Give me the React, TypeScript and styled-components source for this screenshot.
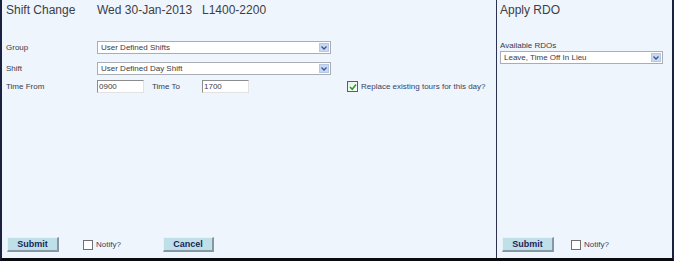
import React from 'react';
import styled, { createGlobalStyle } from 'styled-components';

const Global = createGlobalStyle`
  html, body { margin: 0; padding: 0; background: #ffffff; }
  body { font-family: "Liberation Sans", Arial, sans-serif; }
`;

const Frame = styled.div`
  width: 674px;
  height: 261px;
  box-sizing: border-box;
  display: flex;
  background: #eef5fd;
  border-left: 2px solid #1b2141;
  border-right: 2px solid #1b2141;
  border-bottom: 3px solid #0b0b0d;
`;

const Panel = styled.section<{ $w: number; $pl: number }>`
  width: ${(p) => p.$w}px;
  box-sizing: border-box;
  display: flex;
  flex-direction: column;
  padding: 3px 4px 6px ${(p) => p.$pl}px;
`;

const Divider = styled.div`
  width: 1px;
  background: #2c3252;
`;

const Header = styled.div`
  display: flex;
  font-size: 12px;
  line-height: 14px;
  color: #3d3d45;
  white-space: nowrap;
`;

const HeadCell = styled.span<{ $w?: number }>`
  width: ${(p) => (p.$w ? `${p.$w}px` : 'auto')};
  flex: none;
`;

const Form = styled.div`
  display: flex;
  flex-direction: column;
  margin-top: 24px;
`;

const Row = styled.div<{ $mt?: number }>`
  display: flex;
  align-items: center;
  margin-top: ${(p) => p.$mt ?? 0}px;
`;

const Label = styled.span<{ $w?: number }>`
  width: ${(p) => (p.$w ? `${p.$w}px` : 'auto')};
  flex: none;
  font-size: 8px;
  line-height: 10px;
  color: #3b3b48;
  white-space: nowrap;
`;

const SelectBox = styled.div<{ $w: number }>`
  width: ${(p) => p.$w}px;
  height: 13px;
  box-sizing: border-box;
  display: flex;
  align-items: center;
  justify-content: space-between;
  background: #ffffff;
  border: 1px solid #a8adb6;
  padding: 0 1px 0 3px;
  font-size: 8px;
  color: #3b3b48;
  white-space: nowrap;
`;

const ArrowBtn = styled.span`
  width: 10px;
  height: 9px;
  box-sizing: border-box;
  display: flex;
  align-items: center;
  justify-content: center;
  background: #c9d8f1;
  border: 1px solid #b7c7e6;
`;

const TextInput = styled.div`
  width: 47px;
  height: 13px;
  box-sizing: border-box;
  background: #ffffff;
  border-style: solid;
  border-width: 1px;
  border-color: #8c8c8c #e2e2e2 #e2e2e2 #8c8c8c;
  font-size: 8px;
  line-height: 11px;
  padding-left: 1px;
  color: #3b3b48;
`;

const Check = styled.span<{ $on?: boolean; $size: number }>`
  width: ${(p) => p.$size}px;
  height: ${(p) => p.$size}px;
  box-sizing: border-box;
  flex: none;
  display: flex;
  align-items: center;
  justify-content: center;
  border: 1px solid ${(p) => (p.$on ? '#4e6a52' : '#707070')};
  background: ${(p) => (p.$on ? 'linear-gradient(135deg, #e6efe6, #ffffff)' : '#ffffff')};
`;

const CheckLabel = styled.span`
  font-size: 8px;
  line-height: 10px;
  color: #3a3f66;
  margin-left: 3px;
  white-space: nowrap;
`;

const Footer = styled.div`
  margin-top: auto;
  display: flex;
  align-items: center;
`;

const Button = styled.button<{ $w: number; $ml?: number }>`
  width: ${(p) => p.$w}px;
  height: 15px;
  box-sizing: border-box;
  margin: 0 0 0 ${(p) => p.$ml ?? 0}px;
  padding: 0;
  background: #bfe0e8;
  border-style: solid;
  border-width: 1px 2px 2px 1px;
  border-color: #e6f3f6 #8597a3 #8597a3 #e6f3f6;
  font-family: "Liberation Sans", Arial, sans-serif;
  font-weight: bold;
  font-size: 9px;
  line-height: 11px;
  color: #1b2559;
`;

const Spacer = styled.span<{ $w: number }>`
  width: ${(p) => p.$w}px;
  flex: none;
`;

const Chevron = () => (
  <svg width="6" height="4" viewBox="0 0 6 4">
    <path d="M0.5 0.5 L3 3 L5.5 0.5" fill="none" stroke="#3d5590" strokeWidth="1.3" />
  </svg>
);

const Tick = () => (
  <svg width="8" height="8" viewBox="0 0 8 8">
    <path d="M1 4 L3.2 6.2 L7 1.5" fill="none" stroke="#22a224" strokeWidth="1.6" />
  </svg>
);

const Select = ({ w, value }: { w: number; value: string }) => (
  <SelectBox $w={w}>
    <span>{value}</span>
    <ArrowBtn>
      <Chevron />
    </ArrowBtn>
  </SelectBox>
);

export default function App() {
  return (
    <>
      <Global />
      <Frame>
        <Panel $w={494} $pl={4}>
          <Header>
            <HeadCell $w={91}>Shift Change</HeadCell>
            <HeadCell $w={105}>Wed 30-Jan-2013</HeadCell>
            <HeadCell>L1400-2200</HeadCell>
          </Header>
          <Form>
            <Row>
              <Label $w={91}>Group</Label>
              <Select w={234} value="User Defined Shifts" />
            </Row>
            <Row $mt={8}>
              <Label $w={91}>Shift</Label>
              <Select w={234} value="User Defined Day Shift" />
            </Row>
            <Row $mt={5}>
              <Label $w={91}>Time From</Label>
              <TextInput>0900</TextInput>
              <Spacer $w={8} />
              <Label $w={50}>Time To</Label>
              <TextInput>1700</TextInput>
              <Spacer $w={98} />
              <Check $on $size={11}>
                <Tick />
              </Check>
              <CheckLabel>Replace existing tours for this day?</CheckLabel>
            </Row>
          </Form>
          <Footer>
            <Button $w={52} $ml={1}>Submit</Button>
            <Spacer $w={24} />
            <Check $size={10} />
            <CheckLabel>Notify?</CheckLabel>
            <Spacer $w={42} />
            <Button $w={51}>Cancel</Button>
          </Footer>
        </Panel>
        <Divider />
        <Panel $w={175} $pl={3}>
          <Header>
            <HeadCell>Apply RDO</HeadCell>
          </Header>
          <Form>
            <Label>Available RDOs</Label>
            <Select w={163} value="Leave, Time Off In Lieu" />
          </Form>
          <Footer>
            <Button $w={52} $ml={2}>Submit</Button>
            <Spacer $w={17} />
            <Check $size={10} />
            <CheckLabel>Notify?</CheckLabel>
          </Footer>
        </Panel>
      </Frame>
    </>
  );
}
